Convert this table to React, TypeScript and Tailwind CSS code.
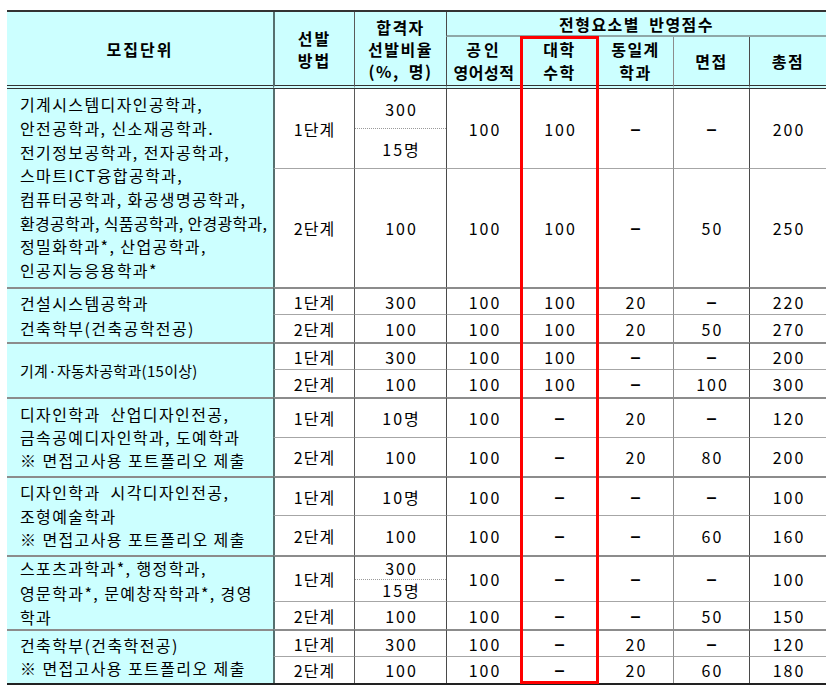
type Row = {
  stage: string;
  ratio: string | [string, string];
  eng: string;
  math: string;
  same: string;
  iv: string;
  total: string;
};

type Group = {
  lines: string[];
  leading: string;
  small?: boolean;
  rows: Row[];
};

// lines that need to be squeezed to fit the first column
const tightLines = ["환경공학과, 식품공학과, 안경광학과,"];

const groups: Group[] = [
  {
    lines: [
      "기계시스템디자인공학과,",
      "안전공학과, 신소재공학과.",
      "전기정보공학과, 전자공학과,",
      "스마트ICT융합공학과,",
      "컴퓨터공학과, 화공생명공학과,",
      "환경공학과, 식품공학과, 안경광학과,",
      "정밀화학과*, 산업공학과,",
      "인공지능응용학과*",
    ],
    leading: "leading-[23.7px]",
    rows: [
      { stage: "1단계", ratio: ["300", "15명"], eng: "100", math: "100", same: "–", iv: "–", total: "200" },
      { stage: "2단계", ratio: "100", eng: "100", math: "100", same: "–", iv: "50", total: "250" },
    ],
  },
  {
    lines: ["건설시스템공학과", "건축학부(건축공학전공)"],
    leading: "leading-[25px]",
    rows: [
      { stage: "1단계", ratio: "300", eng: "100", math: "100", same: "20", iv: "–", total: "220" },
      { stage: "2단계", ratio: "100", eng: "100", math: "100", same: "20", iv: "50", total: "270" },
    ],
  },
  {
    lines: ["기계·자동차공학과(15이상)"],
    leading: "leading-[22px]",
    small: true,
    rows: [
      { stage: "1단계", ratio: "300", eng: "100", math: "100", same: "–", iv: "–", total: "200" },
      { stage: "2단계", ratio: "100", eng: "100", math: "100", same: "–", iv: "100", total: "300" },
    ],
  },
  {
    lines: ["디자인학과  산업디자인전공,", "금속공예디자인학과, 도예학과", "※ 면접고사용 포트폴리오 제출"],
    leading: "leading-[23px]",
    rows: [
      { stage: "1단계", ratio: "10명", eng: "100", math: "–", same: "20", iv: "–", total: "120" },
      { stage: "2단계", ratio: "100", eng: "100", math: "–", same: "20", iv: "80", total: "200" },
    ],
  },
  {
    lines: ["디자인학과  시각디자인전공,", "조형예술학과", "※ 면접고사용 포트폴리오 제출"],
    leading: "leading-[23.5px]",
    rows: [
      { stage: "1단계", ratio: "10명", eng: "100", math: "–", same: "–", iv: "–", total: "100" },
      { stage: "2단계", ratio: "100", eng: "100", math: "–", same: "–", iv: "60", total: "160" },
    ],
  },
  {
    lines: ["스포츠과학과*, 행정학과,", "영문학과*, 문예창작학과*, 경영", "학과"],
    leading: "leading-[24.5px]",
    rows: [
      { stage: "1단계", ratio: ["300", "15명"], eng: "100", math: "–", same: "–", iv: "–", total: "100" },
      { stage: "2단계", ratio: "100", eng: "100", math: "–", same: "–", iv: "50", total: "150" },
    ],
  },
  {
    lines: ["건축학부(건축학전공)", "※ 면접고사용 포트폴리오 제출"],
    leading: "leading-[23px]",
    rows: [
      { stage: "1단계", ratio: "300", eng: "100", math: "–", same: "20", iv: "–", total: "120" },
      { stage: "2단계", ratio: "100", eng: "100", math: "–", same: "20", iv: "60", total: "180" },
    ],
  },
];

function Value({ v }: { v: string }) {
  if (v === "–") {
    return <span className="font-['Liberation_Sans',sans-serif] font-bold text-[18px] leading-[18px]">–</span>;
  }
  return <span className="tracking-[2px] pl-[2px] leading-[18px]">{v}</span>;
}

export default function App() {
  const cells: React.ReactNode[] = [];

  groups.forEach((g, gi) => {
    g.rows.forEach((r, ri) => {
      const top =
        ri === 1
          ? "border-t border-t-[#a6a6a6]"
          : gi === 0
          ? ""
          : "border-t-2 border-t-[#8c8c8c]";
      const base = `flex items-center justify-center ${top}`;

      if (ri === 0) {
        cells.push(
          <div
            key={`g${gi}`}
            className={`row-span-2 flex flex-col justify-center overflow-hidden bg-[#ccffff] pl-[13px] whitespace-pre ${
              g.small ? "text-[15px] tracking-[0.3px]" : "text-[16px] tracking-[1.4px]"
            } ${g.leading} ${gi === 0 ? "" : "border-t-2 border-t-[#8c8c8c]"}`}
          >
            {g.lines.map((l) => (
              <div key={l} className={tightLines.includes(l) ? "tracking-[0.3px]" : ""}>
                {l}
              </div>
            ))}
          </div>
        );
      }

      cells.push(
        <div key={`${gi}-${ri}-s`} className={`${base} tracking-[1px] border-l-2 border-l-[#56706f]`}>
          {r.stage}
        </div>
      );

      if (Array.isArray(r.ratio)) {
        cells.push(
          <div key={`${gi}-${ri}-r`} className={`flex flex-col border-l border-l-[#5a5a5a] ${top}`}>
            <div className="flex flex-1 items-center justify-center border-b border-dotted border-b-[#9a9a9a]">
              <Value v={r.ratio[0]} />
            </div>
            <div className="flex flex-1 items-center justify-center">
              <Value v={r.ratio[1]} />
            </div>
          </div>
        );
      } else {
        cells.push(
          <div key={`${gi}-${ri}-r`} className={`${base} border-l border-l-[#5a5a5a]`}>
            <Value v={r.ratio} />
          </div>
        );
      }

      cells.push(
        <div key={`${gi}-${ri}-e`} className={`${base} border-l border-l-[#4a4a4a]`}>
          <Value v={r.eng} />
        </div>,
        <div key={`${gi}-${ri}-m`} className={`${base} border-l border-l-[#5a5a5a]`}>
          <Value v={r.math} />
        </div>,
        <div key={`${gi}-${ri}-d`} className={`${base} border-l border-l-[#5a5a5a]`}>
          <Value v={r.same} />
        </div>,
        <div key={`${gi}-${ri}-i`} className={`${base} border-l border-l-[#8c8c8c]`}>
          <Value v={r.iv} />
        </div>,
        <div key={`${gi}-${ri}-t`} className={`${base} border-l border-l-[#4a4a4a]`}>
          <Value v={r.total} />
        </div>
      );
    });
  });

  const headBottom = "border-b-4 border-double border-b-[#333]";

  return (
    <div className="min-h-screen bg-white pl-[7px] pt-[10px] font-['Noto_Sans_CJK_KR',sans-serif] text-black">
      <div className="relative w-[819px]">
        <div className="grid grid-cols-[266px_81px_92px_75px_76px_76px_76px_77px] grid-rows-[25px_52px_79px_119px_27px_28px_27px_28px_40px_39px_39px_40px_46px_28px_27px_27px] border-t-2 border-b-2 border-t-[#333] border-b-[#222] text-[16px]">
          {/* header */}
          <div className={`row-span-2 flex items-center justify-center bg-[#ccffff] font-bold tracking-[2px] ${headBottom}`}>
            모집단위
          </div>
          <div className={`row-span-2 flex flex-col items-center justify-center bg-[#ccffff] font-bold leading-[22px] tracking-[2px] border-l-2 border-l-[#56706f] ${headBottom}`}>
            <div>선발</div>
            <div>방법</div>
          </div>
          <div className={`row-span-2 flex flex-col items-center justify-center bg-[#ccffff] font-bold leading-[22px] tracking-[1.5px] border-l border-l-[#5a5a5a] ${headBottom}`}>
            <div>합격자</div>
            <div>선발비율</div>
            <div className="[word-spacing:4px]">(%, 명)</div>
          </div>
          <div className="col-span-5 flex items-center justify-center bg-[#ccffff] font-bold tracking-[1.5px] border-l border-l-[#4a4a4a] border-b-2 border-b-[#8fa8a8] [word-spacing:4px]">
            전형요소별 반영점수
          </div>
          <div className={`flex flex-col items-center justify-center bg-[#ccffff] font-bold leading-[23px] border-l border-l-[#4a4a4a] ${headBottom}`}>
            <div className="tracking-[3px]">공인</div>
            <div className="tracking-[0.5px]">영어성적</div>
          </div>
          <div className={`flex flex-col items-center justify-center bg-[#ccffff] font-bold leading-[23px] tracking-[1.5px] border-l border-l-[#5a5a5a] ${headBottom}`}>
            <div>대학</div>
            <div>수학</div>
          </div>
          <div className={`flex flex-col items-center justify-center bg-[#ccffff] font-bold leading-[23px] tracking-[1.5px] border-l border-l-[#5a5a5a] ${headBottom}`}>
            <div>동일계</div>
            <div>학과</div>
          </div>
          <div className={`flex items-center justify-center bg-[#ccffff] font-bold tracking-[1.5px] border-l border-l-[#8c8c8c] ${headBottom}`}>
            면접
          </div>
          <div className={`flex items-center justify-center bg-[#ccffff] font-bold tracking-[1.5px] border-l border-l-[#4a4a4a] ${headBottom}`}>
            총점
          </div>

          {cells}
        </div>

        {/* highlight on 대학수학 column */}
        <div className="pointer-events-none absolute left-[513px] top-[26px] h-[648px] w-[79px] border-[3px] border-[#ff0000]" />
      </div>
    </div>
  );
}
